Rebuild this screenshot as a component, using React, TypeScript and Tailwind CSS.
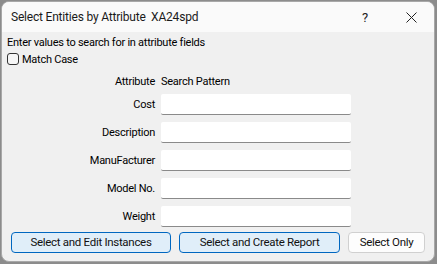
const fields = ["Cost", "Description", "ManuFacturer", "Model No.", "Weight"];

export default function App() {
  return (
    <div className="w-[437px] h-[264px] bg-[#8c8c8c] p-[1px] overflow-hidden">
      <div className="w-[434px] h-[261px] rounded-[8px] overflow-hidden border border-[#a8a8a8] bg-[#f0f0f0] flex flex-col font-['Roboto',sans-serif] text-[11px] tracking-[-0.25px] leading-[13px] text-black">
        {/* title bar */}
        <div className="h-[30px] bg-[#fafafa] flex items-center pl-[9px] shrink-0">
          <span className="text-[12px] tracking-[-0.2px] text-[#1a1a1a] whitespace-pre">
            Select Entities by Attribute  XA24spd
          </span>
          <span className="ml-auto w-[46px] text-center text-[13px] text-[#222]">?</span>
          <span className="w-[46px] h-[30px] flex items-center justify-center">
            <svg width="11" height="11" viewBox="0 0 11 11">
              <path d="M0.5 0.5L10.5 10.5M10.5 0.5L0.5 10.5" stroke="#222" strokeWidth="1" />
            </svg>
          </span>
        </div>

        {/* body */}
        <div className="flex flex-col pl-[5px] pt-[4px]">
          <p>Enter values to search for in attribute fields</p>
          <label className="flex items-center gap-[3px] mt-[3px] h-[14px]">
            <span className="w-[12px] h-[12px] rounded-[3px] border border-[#333] bg-[#f6f6f6]" />
            <span>Match Case</span>
          </label>

          <div className="grid grid-cols-[148px_190px] gap-x-[6px] mt-[9px] items-center">
            <span className="text-right">Attribute</span>
            <span>Search Pattern</span>
          </div>

          <div className="flex flex-col gap-[7px] mt-[6px]">
            {fields.map((f) => (
              <div key={f} className="grid grid-cols-[148px_190px] gap-x-[6px] items-center">
                <span className="text-right">{f}</span>
                <div className="h-[21px] bg-white border-b border-[#8a8a8a] rounded-[2px]" />
              </div>
            ))}
          </div>
        </div>

        {/* buttons */}
        <div className="flex gap-[8px] pl-[9px] mt-[5px] text-[11.5px] tracking-[-0.3px] text-[#111]">
          <button className="w-[160px] h-[21px] rounded-[4px] border border-[#0067c0] bg-[#e0eef9] leading-none">
            Select and Edit Instances
          </button>
          <button className="w-[161px] h-[21px] rounded-[4px] border border-[#0067c0] bg-[#e0eef9] leading-none">
            Select and Create Report
          </button>
          <button className="w-[77px] h-[21px] rounded-[4px] border border-[#d0d0d0] bg-[#fdfdfd] leading-none">
            Select Only
          </button>
        </div>
      </div>
    </div>
  );
}
